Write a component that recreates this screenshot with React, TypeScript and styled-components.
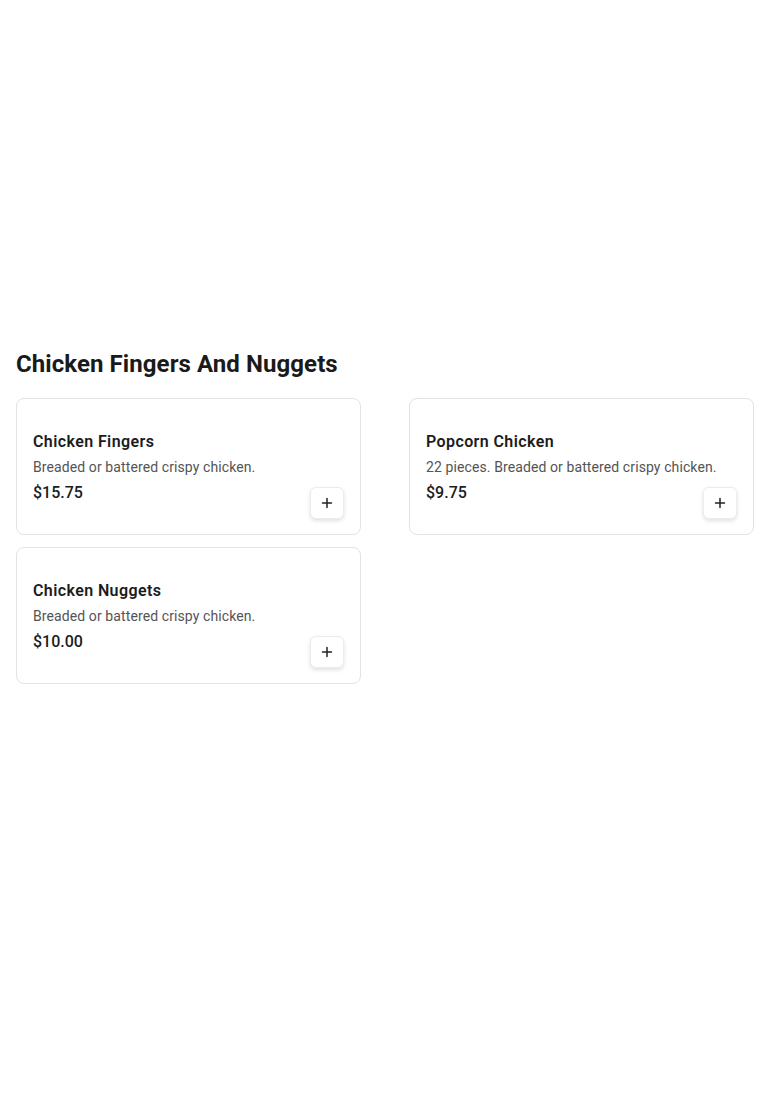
import styled, { createGlobalStyle } from "styled-components";

const GlobalStyle = createGlobalStyle`
  html, body {
    margin: 0;
    padding: 0;
    background: #ffffff;
  }
  body {
    font-family: Roboto, "Liberation Sans", Arial, sans-serif;
    color: #1c1c1c;
  }
  * {
    box-sizing: border-box;
  }
`;

const items = [
  {
    id: 1,
    name: "Chicken Fingers",
    description: "Breaded or battered crispy chicken.",
    price: "$15.75",
  },
  {
    id: 2,
    name: "Popcorn Chicken",
    description: "22 pieces. Breaded or battered crispy chicken.",
    price: "$9.75",
  },
  {
    id: 3,
    name: "Chicken Nuggets",
    description: "Breaded or battered crispy chicken.",
    price: "$10.00",
  },
];

const PlusIcon = () => (
  <svg width="12" height="12" viewBox="0 0 12 12" fill="none">
    <path d="M6 1.5v9M1.5 6h9" stroke="#222" strokeWidth="1.5" strokeLinecap="round" />
  </svg>
);

export default function App() {
  return (
    <>
      <GlobalStyle />
      <Section>
        <Heading>Chicken Fingers And Nuggets</Heading>
        <Grid>
          {items.map((item) => (
            <Card key={item.id}>
              <Info>
                <Title>{item.name}</Title>
                <Description>{item.description}</Description>
                <Price>{item.price}</Price>
              </Info>
              <AddButton aria-label={`Add ${item.name}`}>
                <PlusIcon />
              </AddButton>
            </Card>
          ))}
        </Grid>
      </Section>
    </>
  );
}

const Section = styled.section`
  padding: 348px 16px 0;
`;

const Heading = styled.h2`
  margin: 0 0 18px;
  font-size: 24px;
  line-height: 32px;
  font-weight: 700;
  letter-spacing: 0.08px;
  color: #1a1a1a;
`;

const Grid = styled.div`
  display: grid;
  grid-template-columns: 1fr 1fr;
  column-gap: 48px;
  row-gap: 12px;
`;

const Card = styled.div`
  display: grid;
  grid-template-columns: 1fr;
  min-height: 137px;
  padding: 31px 16px 15px;
  border: 1px solid #e3e3e3;
  border-radius: 8px;
  background: #fff;
`;

const Info = styled.div`
  grid-area: 1 / 1;
  display: flex;
  flex-direction: column;
  align-self: start;
`;

const Title = styled.div`
  font-size: 16px;
  line-height: 24px;
  font-weight: 600;
  letter-spacing: 0.4px;
  color: #1c1c1c;
  margin-bottom: 3px;
`;

const Description = styled.div`
  font-size: 14px;
  line-height: 20px;
  letter-spacing: 0.1px;
  color: #545454;
  margin-bottom: 4px;
`;

const Price = styled.div`
  font-size: 16px;
  line-height: 24px;
  font-weight: 500;
  color: #1c1c1c;
`;

const AddButton = styled.button`
  grid-area: 1 / 1;
  justify-self: end;
  align-self: end;
  display: flex;
  align-items: center;
  justify-content: center;
  width: 34px;
  height: 32px;
  padding: 0;
  border: 1px solid #ececec;
  border-radius: 6px;
  background: #fff;
  box-shadow: 0 2px 4px rgba(0, 0, 0, 0.12);
  cursor: pointer;
`;
